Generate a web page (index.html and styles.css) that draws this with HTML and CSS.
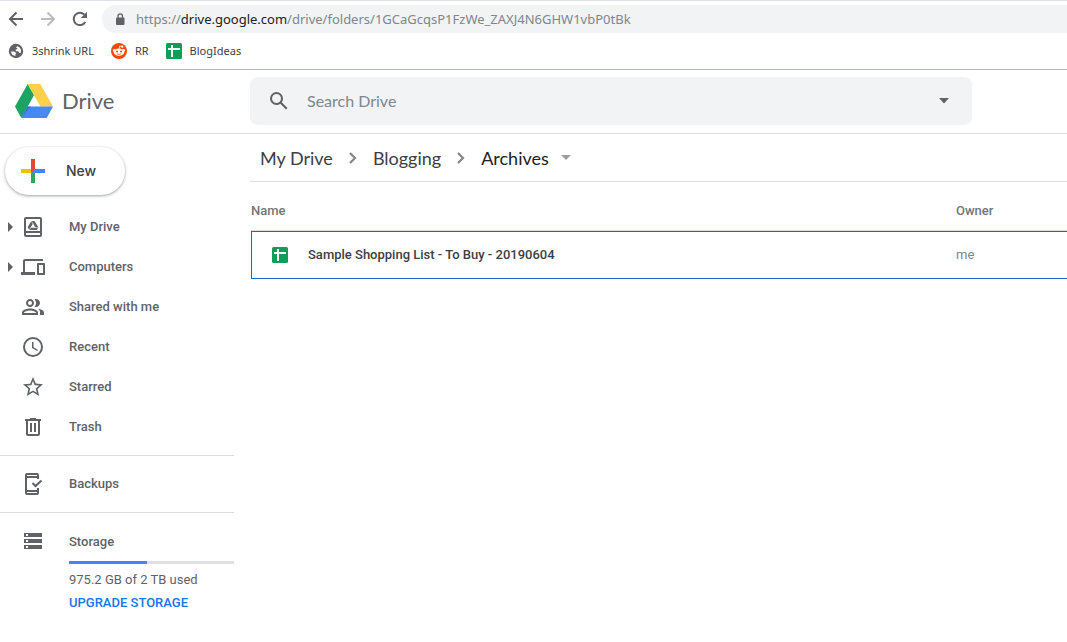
FILE: index.html
```html
<!DOCTYPE html>
<html lang="en">
<head>
<meta charset="utf-8">
<title>Archives - Google Drive</title>
<link rel="stylesheet" href="styles.css">
</head>
<body>
<header class="browser">
  <div class="toolbar">
    <button class="tool" aria-label="Back"><svg width="16" height="16" viewBox="0 0 16 16" fill="none" stroke="#5f6368" stroke-width="2"><path d="M15 8H2.500M8.500 1.500L2 8l6.500 6.500"/></svg></button>
    <button class="tool" aria-label="Forward"><svg width="16" height="16" viewBox="0 0 16 16" fill="none" stroke="#babcbe" stroke-width="2"><path d="M1 8h12.500M7.500 1.500L14 8l-6.500 6.500"/></svg></button>
    <button class="tool" aria-label="Reload"><svg width="16" height="16" viewBox="0 0 16 16"><path d="M13.300 11A6.200 6.200 0 1 1 12.400 3.600" fill="none" stroke="#5f6368" stroke-width="2"/><path d="M15 .800V7H8.800z" fill="#5f6368"/></svg></button>
    <div class="address">
      <svg width="10" height="13" viewBox="0 0 10 13"><rect x="1" y="4.500" width="8.500" height="7.500" rx="1" fill="#5f6368"/><path d="M3 5V3.200a2.250 2.250 0 0 1 4.500 0V5" fill="none" stroke="#5f6368" stroke-width="1.300"/></svg>
      <span class="url">https://<b class="host">drive.google.com</b>/drive/folders/1GCaGcqsP1FzWe_ZAXJ4N6GHW1vbP0tBk</span>
    </div>
  </div>
  <nav class="bookmarks" aria-label="Bookmarks">
    <a href="#"><svg width="16" height="16" viewBox="0 0 16 16"><circle cx="8" cy="8" r="7.200" fill="#5f6368"/><path d="M3 8.600h3.300l2 1.700-1 1.200.2 1.600C5 12.900 3.100 11.200 3 8.600zM9.500 3.200c2 .6 3.500 2.500 3.500 4.700 0 .8-.2 1.500-.5 2.100l-1.300-.3-.9-1.500H8.400L7.300 7l2-.9-.1-1.200-1.500-.4z" fill="#fff"/></svg><span>3shrink URL</span></a>
    <a href="#"><svg width="16" height="16" viewBox="0 0 16 16"><circle cx="8" cy="8" r="8" fill="#ff4500"/><path d="M8 6l.8-3 2.400.6" fill="none" stroke="#fff" stroke-width=".8"/><circle cx="11.300" cy="3.700" r="1.100" fill="#fff"/><circle cx="3.300" cy="7.500" r="1.400" fill="#fff"/><circle cx="12.700" cy="7.500" r="1.400" fill="#fff"/><ellipse cx="8" cy="9.200" rx="5.200" ry="3.700" fill="#fff"/><circle cx="6" cy="8.500" r="1" fill="#ff4500"/><circle cx="10" cy="8.500" r="1" fill="#ff4500"/><path d="M5.800 10.800q2.200 1.400 4.400 0" fill="none" stroke="#ff4500" stroke-width=".8"/></svg><span>RR</span></a>
    <a href="#"><svg width="16" height="16" viewBox="0 0 16 16"><rect width="16" height="16" rx="1.500" fill="#0f9d58"/><path d="M2 5h12v2H7v7H5V7H2zM5 2h2v3H5z" fill="#fff"/></svg><span>BlogIdeas</span></a>
  </nav>
</header>

<div class="masthead">
  <a class="brand" href="#">
    <svg width="38" height="34" viewBox="0 0 38 34"><path d="M12.700 0L0 22.500 6.300 34 19 11.300z" fill="#1da462"/><path d="M12.700 0h12.600L38 22.500H25.500z" fill="#ffcf48"/><path d="M12.500 22.500H38L31.700 34H6.300z" fill="#4688f4"/><path d="M12.500 22.500L6.300 34l9.500-11.500z" fill="#3567c9" opacity=".7"/></svg>
    <span>Drive</span>
  </a>
  <form class="search">
    <button class="icon-btn" type="button" aria-label="Search"><svg width="24" height="24" viewBox="0 0 24 24" fill="#5f6368"><path d="M20.490 19l-5.730-5.730C15.530 12.200 16 10.910 16 9.500A6.500 6.500 0 1 0 9.500 16c1.410 0 2.700-.47 3.770-1.240L19 20.490 20.490 19zM5 9.500C5 7.010 7.010 5 9.500 5S14 7.010 14 9.500 11.990 14 9.500 14 5 11.990 5 9.500z"/></svg></button>
    <input class="search-input" type="text" placeholder="Search Drive" aria-label="Search Drive">
    <button class="icon-btn" type="button" aria-label="Search options"><svg width="10" height="6" viewBox="0 0 10 6"><path d="M0 0h10L5 5.500z" fill="#5f6368"/></svg></button>
  </form>
</div>

<div class="workspace">
  <aside class="sidebar">
    <button class="new-btn"><svg width="24" height="24" viewBox="0 0 24 24"><path d="M10 0h4v10l-4 4z" fill="#ea4335"/><path d="M0 10h10v4H0z" fill="#fbbc04"/><path d="M10 14l4-4v14h-4z" fill="#34a853"/><path d="M14 10h10v4H10z" fill="#4285f4"/></svg><span>New</span></button>
    <nav class="places" aria-label="Places">
      <a href="#"><svg class="caret" width="5" height="10" viewBox="0 0 5 10"><path d="M0 0l5 5-5 5z"/></svg><svg class="glyph" width="24" height="24" viewBox="0 0 24 24"><path fill-rule="evenodd" d="M5 2h14a2 2 0 0 1 2 2v16a2 2 0 0 1-2 2H5a2 2 0 0 1-2-2V4a2 2 0 0 1 2-2zm0 2v12h14V4zm0 14v2h14v-2z"/><path fill-rule="evenodd" d="M10.300 6h3.200l3.900 6.200-1.500 2.800H8.300l-1.600-2.700zM12 8.500L9.600 12.700h4.900z"/><path d="M10.300 6l2 3.400M17.400 12.600h-4M8.300 15l2-3.400" stroke="#fff" stroke-width=".6"/></svg><span>My Drive</span></a>
      <a href="#"><svg class="caret" width="5" height="10" viewBox="0 0 5 10"><path d="M0 0l5 5-5 5z"/></svg><svg class="glyph" width="24" height="24" viewBox="0 0 24 24"><path d="M4 6h18V4H4c-1.100 0-2 .9-2 2v11H0v3h14v-3H4V6zm19 2h-6c-.55 0-1 .45-1 1v10c0 .55.45 1 1 1h6c.55 0 1-.45 1-1V9c0-.55-.45-1-1-1zm-1 10h-4v-8h4v8z"/></svg><span>Computers</span></a>
      <a href="#"><svg class="glyph" width="24" height="24" viewBox="0 0 24 24"><path d="M9 12c2.200 0 4-1.800 4-4s-1.800-4-4-4-4 1.800-4 4 1.800 4 4 4zm0-6a2 2 0 1 1 0 4 2 2 0 0 1 0-4zM9 13.500c-2.670 0-8 1.340-8 4V20h16v-2.500c0-2.660-5.330-4-8-4zM3 18v-.5c.2-.72 3.300-2 6-2s5.800 1.280 6 2v.5zM15 12c2.200 0 4-1.800 4-4s-1.800-4-4-4c-.5 0-1 .1-1.400.25a6 6 0 0 1 0 7.500c.4.150.9.250 1.400.25zM17 13.800c1.200.85 2 2.050 2 3.700V20h4v-2.500c0-2-3.200-3.300-6-3.700z"/></svg><span>Shared with me</span></a>
      <a href="#"><svg class="glyph" width="24" height="24" viewBox="0 0 24 24"><circle cx="12" cy="12" r="9" fill="none" stroke="#5f6368" stroke-width="2"/><path d="M11 7h1.500v5.200l4.500 2.700-.8 1.200L11 13z"/></svg><span>Recent</span></a>
      <a href="#"><svg class="glyph" width="24" height="24" viewBox="0 0 24 24"><path d="M22 9.240l-7.190-.62L12 2 9.190 8.630 2 9.240l5.460 4.730L5.820 21 12 17.270 18.180 21l-1.630-7.030L22 9.240zM12 15.400l-3.760 2.270 1-4.280-3.320-2.880 4.380-.38L12 6.100l1.710 4.040 4.380.38-3.320 2.880 1 4.280L12 15.400z"/></svg><span>Starred</span></a>
      <a href="#"><svg class="glyph" width="24" height="24" viewBox="0 0 24 24"><path fill-rule="evenodd" d="M15 4V3H9v1H4v2h1v13a2 2 0 0 0 2 2h10a2 2 0 0 0 2-2V6h1V4zm2 15H7V6h10zM9 8h2v9H9zm4 0h2v9h-2z"/></svg><span>Trash</span></a>
    </nav>
    <nav class="places section" aria-label="Backups">
      <a href="#"><svg class="glyph" width="24" height="24" viewBox="0 0 24 24"><path fill-rule="evenodd" d="M6 1h10a2 2 0 0 1 2 2v4h-2V6H6v12h10v-2h2v5a2 2 0 0 1-2 2H6a2 2 0 0 1-2-2V3a2 2 0 0 1 2-2zm0 2v1h10V3zm0 17v1h10v-1z"/><path d="M11.500 11l3 3 6-5.500" fill="none" stroke="#5f6368" stroke-width="2"/></svg><span>Backups</span></a>
    </nav>
    <section class="storage">
      <svg class="glyph" width="24" height="24" viewBox="0 0 24 24"><path fill-rule="evenodd" d="M3 4h18v4H3zm2 1v2h2V5zM3 10h18v4H3zm2 1v2h2v-2zM3 16h18v4H3zm2 1v2h2v-2z"/></svg>
      <div class="storage-info">
        <a class="storage-title" href="#">Storage</a>
        <div class="meter"><div class="meter-fill" style="width:47.5%"></div></div>
        <p class="usage">975.2 GB of 2 TB used</p>
        <a class="upgrade" href="#">UPGRADE STORAGE</a>
      </div>
    </section>
  </aside>

  <main class="content">
    <nav class="crumbs" aria-label="Breadcrumb">
      <a href="#">My Drive</a>
      <svg width="8" height="12" viewBox="0 0 8 12"><path d="M1 1l5 5-5 5" fill="none" stroke="#80868b" stroke-width="2.200"/></svg>
      <a href="#">Blogging</a>
      <svg width="8" height="12" viewBox="0 0 8 12"><path d="M1 1l5 5-5 5" fill="none" stroke="#80868b" stroke-width="2.200"/></svg>
      <button class="current">Archives<svg width="10" height="5" viewBox="0 0 10 5"><path d="M0 0h10L5 5z" fill="#9a9da1"/></svg></button>
    </nav>
    <table class="files">
      <thead><tr><th class="name-col" scope="col">Name</th><th scope="col">Owner</th></tr></thead>
      <tbody><tr>
        <td><a class="file" href="#"><svg width="16" height="16" viewBox="0 0 16 16"><rect width="16" height="16" rx="1.500" fill="#0f9d58"/><path d="M2 5h12v2H7v7H5V7H2zM5 2h2v3H5z" fill="#fff"/></svg><span>Sample Shopping List - To Buy - 20190604</span></a></td>
        <td class="owner">me</td>
      </tr></tbody>
    </table>
  </main>
</div>
</body>
</html>
```

FILE: styles.css
```css
* { box-sizing: border-box; }
body {
  margin: 0;
  background: #fff;
  color: #5f6368;
  font: 500 13px/16px Roboto, sans-serif;
  overflow-x: hidden;
}
a { color: inherit; text-decoration: none; }
button { border: 0; padding: 0; background: none; color: inherit; font: inherit; cursor: pointer; }
svg { display: block; flex: none; }

.browser {
  border-top: 1px solid #dee1e6;
  border-bottom: 1px solid #b6b6b6;
  font-family: "Noto Sans", "Open Sans", sans-serif;
  font-weight: 400;
}
.toolbar { display: flex; align-items: center; gap: 16px; padding: 4px 0 0 8px; }
.address {
  flex: 1;
  display: flex;
  align-items: center;
  gap: 11px;
  height: 28px;
  margin-left: -2px;
  padding-left: 13px;
  border-radius: 14px 0 0 14px;
  background: #f1f3f4;
}
.url { color: #80868b; font-size: 13px; white-space: nowrap; }
.host { color: #202124; font-weight: 400; }
.bookmarks { display: flex; gap: 17px; padding: 10px 8px; font-size: 11px; color: #3c4043; }
.bookmarks a { display: flex; align-items: center; gap: 8px; }

.masthead {
  display: flex;
  align-items: center;
  padding: 7px 0 8px;
  border-bottom: 1px solid #dadce0;
}
.brand {
  flex: none;
  display: flex;
  align-items: center;
  gap: 9px;
  width: 250px;
  padding-left: 15px;
  font: 400 22px/28px Lato, sans-serif;
}
.search {
  flex: 1;
  display: flex;
  align-items: center;
  max-width: 722px;
  height: 48px;
  margin: 0;
  border-radius: 8px;
  background: #f1f3f4;
}
.icon-btn { display: flex; align-items: center; justify-content: center; width: 57px; height: 48px; }
.search-input {
  flex: 1;
  min-width: 0;
  border: 0;
  padding: 0;
  outline: 0;
  background: none;
  color: #202124;
  font: 400 16px/24px Lato, sans-serif;
}
.search-input::placeholder { color: #80868b; opacity: 1; }

.workspace { display: flex; }
.sidebar { flex: none; width: 234px; margin-right: 16px; }
.new-btn {
  display: flex;
  align-items: center;
  gap: 21px;
  height: 48px;
  margin: 13px 0 12px 5px;
  padding: 0 29px 0 16px;
  border-radius: 24px;
  background: #fff;
  box-shadow: 0 1px 2px rgba(60, 64, 67, .3), 0 1px 3px 1px rgba(60, 64, 67, .15);
  color: #3c4043;
  font-family: Inter, sans-serif;
  font-size: 14px;
}
.places { padding-bottom: 8px; border-bottom: 1px solid #dadce0; }
.places a {
  position: relative;
  display: flex;
  align-items: center;
  gap: 24px;
  height: 40px;
  padding-left: 21px;
}
.section { padding-top: 8px; }
.caret { position: absolute; left: 8px; fill: #5f6368; }
.glyph { fill: #5f6368; }
.storage { display: flex; gap: 24px; padding: 16px 0 0 21px; }
.storage-info { flex: 1; padding-top: 5px; }
.storage-title { display: block; }
.meter { height: 3px; margin: 11px 0 8px; background: #e0e0e0; }
.meter-fill { height: 100%; background: #4285f4; }
.usage { margin: 0 0 7px; font-weight: 400; }
.upgrade { color: #1a73e8; }

.content { flex: 1; min-width: 0; }
.crumbs {
  display: flex;
  align-items: center;
  gap: 16px;
  height: 48px;
  padding-left: 10px;
  border-bottom: 1px solid #dadce0;
  color: #3c4043;
  font: 400 18px/24px Lato, sans-serif;
}
.current { display: flex; align-items: center; gap: 12px; color: #202124; }

.files { width: 100%; padding-left: 1px; border-collapse: separate; border-spacing: 0; table-layout: fixed; }
.files th { height: 49px; padding: 10px 0 0; border-bottom: 1px solid #dadce0; text-align: left; font-weight: 500; color: #757575; }
.name-col { width: 705px; }
.files td { height: 48px; padding: 0; border: solid #1967d2; border-width: 1px 0; }
.files td:first-child { border-left-width: 1px; }
.file { display: flex; align-items: center; gap: 20px; padding-left: 20px; color: #3c4043; }
.files .owner { color: #80868b; font-weight: 400; }
```
